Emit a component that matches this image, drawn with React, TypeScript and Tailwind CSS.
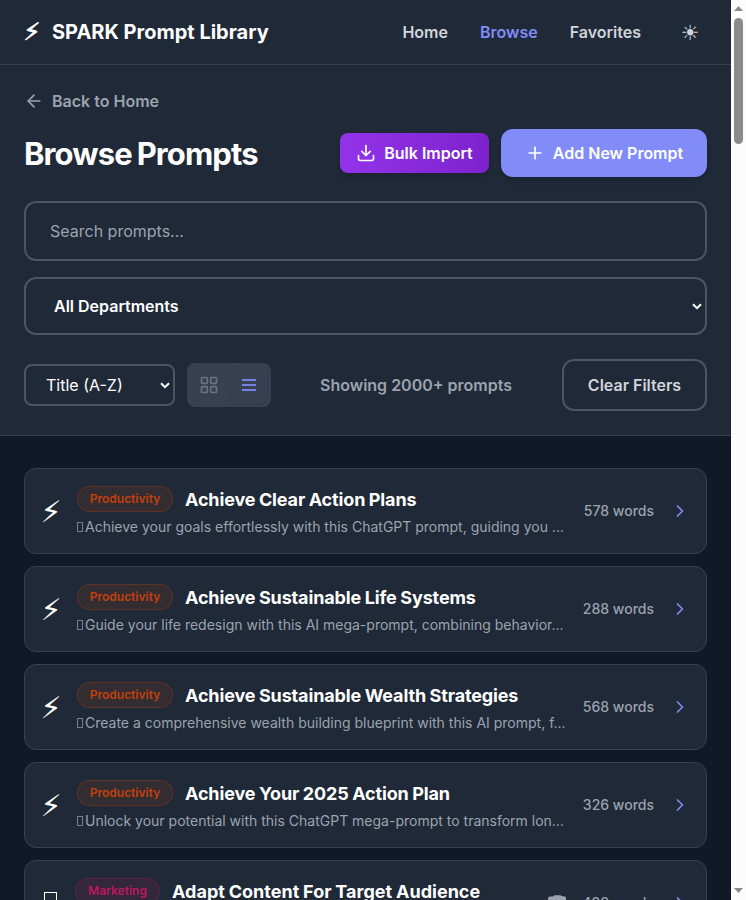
import { ArrowLeft, Download, Plus, ChevronRight, LayoutGrid } from "lucide-react";

type Prompt = { tag: string; title: string; text: string; words: string };

const prompts: Prompt[] = [
  { tag: "Productivity", title: "Achieve Clear Action Plans", text: "Achieve your goals effortlessly with this ChatGPT prompt, guiding you ...", words: "578 words" },
  { tag: "Productivity", title: "Achieve Sustainable Life Systems", text: "Guide your life redesign with this AI mega-prompt, combining behavior...", words: "288 words" },
  { tag: "Productivity", title: "Achieve Sustainable Wealth Strategies", text: "Create a comprehensive wealth building blueprint with this AI prompt, f...", words: "568 words" },
  { tag: "Productivity", title: "Achieve Your 2025 Action Plan", text: "Unlock your potential with this ChatGPT mega-prompt to transform lon...", words: "326 words" },
  { tag: "Marketing", title: "Adapt Content For Target Audience", text: "Adapt your content for each audience with this ChatGPT prompt...", words: "498 words" },
];

function SelectArrow() {
  return (
    <svg width="10" height="7" viewBox="0 0 10 7" fill="none" stroke="#fff" strokeWidth="2" className="shrink-0">
      <path d="M1 1.2 5 5.2 9 1.2" />
    </svg>
  );
}

function CameraIcon() {
  return (
    <svg width="18" height="16" viewBox="0 0 18 16" className="shrink-0 self-center text-[#9ca3af]">
      <path fill="currentColor" d="M2 1.5h3L6.5.3h6l1.5 1h2A2 2 0 0 1 18 3.3V13a2 2 0 0 1-2 2H2a2 2 0 0 1-2-2V3.5a2 2 0 0 1 2-2Z" />
      <circle cx="9.5" cy="9" r="4" fill="#1f2937" />
      <circle cx="9.5" cy="9" r="2.5" fill="currentColor" />
    </svg>
  );
}

function Row({ p }: { p: Prompt }) {
  const marketing = p.tag === "Marketing";
  return (
    <article className="flex h-[86px] shrink-0 items-center gap-4 rounded-xl border border-[#374151] bg-[#1f2937] px-4">
      {marketing ? (
        <span className="flex w-[18px] shrink-0 justify-center">
          <span className="h-[22px] w-[13px] border-[1.5px] border-white" />
        </span>
      ) : (
        <span className="flex w-5 shrink-0 justify-center pt-px font-['DejaVu_Sans',sans-serif] text-[30px] leading-9 text-white">{"⚡\uFE0E"}</span>
      )}
      <div className="min-w-0 flex-1">
        <div className="mb-1 flex h-7 items-center gap-3">
          <span
            className={
              "shrink-0 rounded-full border py-1 text-center text-xs font-semibold " +
              (marketing
                ? "w-[85px] border-[#be185d]/30 bg-[#be185d]/12 text-[#be185d]"
                : "w-24 border-[#c2410c]/30 bg-[#c2410c]/12 text-[#c2410c]")
            }
          >
            {p.tag}
          </span>
          <h3
            className={
              "pt-0.5 text-lg font-bold whitespace-nowrap text-white [word-spacing:-0.5px] " +
              (marketing ? "tracking-[0.02px]" : "tracking-[-0.14px]")
            }
          >
            {p.title}
          </h3>
        </div>
        <p className="flex items-center text-sm whitespace-nowrap text-[#9ca3af]">
          <span className="mr-[2px] h-[10px] w-[6px] shrink-0 border border-[#9ca3af]/70" />
          {p.text}
        </p>
      </div>
      {marketing && <CameraIcon />}
      <span className="shrink-0 text-sm font-medium text-[#9ca3af]">{p.words}</span>
      <ChevronRight size={20} className="shrink-0 text-[#818cf8]" />
    </article>
  );
}

export default function App() {
  return (
    <div className="flex h-[900px] w-[746px] overflow-hidden bg-[#111827] font-['Inter',sans-serif]">
      <div className="flex w-[731px] flex-col">
        <header className="flex h-[65px] shrink-0 items-center justify-between border-b border-[#374151] bg-[#1f2937] px-6">
          <div className="flex items-center gap-3 text-xl font-bold text-white">
            <span className="flex w-4 justify-center font-['DejaVu_Sans',sans-serif] text-2xl [-webkit-text-stroke:0.8px_white]">{"⚡\uFE0E"}</span>
            <span>SPARK Prompt Library</span>
          </div>
          <nav className="flex items-center gap-8 font-semibold text-[#d1d5db]">
            <span>Home</span>
            <span className="text-[#818cf8]">Browse</span>
            <span>Favorites</span>
            <span className="flex w-[34px] justify-center pt-1 font-['DejaVu_Sans',sans-serif] text-[21px] font-normal">{"☀\uFE0E"}</span>
          </nav>
        </header>
        <section className="flex h-[371px] shrink-0 flex-col border-b border-[#374151] bg-[#1f2937] px-6 pt-6">
          <div className="flex h-6 items-center gap-2 font-semibold text-[#9ca3af]">
            <ArrowLeft size={20} />
            Back to Home
          </div>
          <div className="mt-4 flex h-12 items-center justify-between">
            <h1 className="pt-0.5 text-[31px] font-bold tracking-[-0.9px] text-white [word-spacing:-1.5px]">Browse Prompts</h1>
            <div className="flex items-center gap-3 font-semibold text-white">
              <button className="flex h-10 w-[149px] items-center justify-center gap-2 rounded-lg bg-linear-to-r from-[#9333ea] to-[#7e22ce] shadow-md">
                <Download size={20} />
                Bulk Import
              </button>
              <button className="flex h-12 w-[206px] items-center justify-center gap-2 rounded-xl bg-[#818cf8] shadow-md">
                <Plus size={20} />
                Add New Prompt
              </button>
            </div>
          </div>
          <div className="mt-6 flex h-[60px] items-center rounded-xl border-2 border-[#4b5563] px-6 text-[#9ca3af]">Search prompts...</div>
          <div className="mt-4 flex h-[58px] items-center justify-between rounded-xl border-2 border-[#4b5563] pr-[3px] pl-7 font-semibold text-white">
            All Departments
            <SelectArrow />
          </div>
          <div className="mt-6 flex h-[52px] items-center">
            <div className="flex h-[42px] w-[151px] items-center justify-between rounded-lg border-2 border-[#4b5563] pr-[3px] pl-5 text-white">
              Title (A-Z)
              <SelectArrow />
            </div>
            <div className="ml-3 flex h-11 w-[84px] items-center gap-1 rounded-lg bg-[#374151] p-1">
              <div className="flex h-9 w-9 items-center justify-center text-[#6b7280]">
                <LayoutGrid size={20} />
              </div>
              <div className="flex h-9 w-9 items-center justify-center rounded-md bg-[#374151] text-[#7480e4] shadow">
                <svg width="20" height="20" viewBox="0 0 20 20" stroke="currentColor" strokeWidth="1.8">
                  <path d="M3 5h14M3 10h14M3 15h14" />
                </svg>
              </div>
            </div>
            <span className="ml-auto font-semibold text-[#9ca3af]">Showing 2000+ prompts</span>
            <button className="ml-[50px] h-[52px] w-[145px] rounded-xl border-2 border-[#4b5563] font-semibold text-[#d1d5db]">Clear Filters</button>
          </div>
        </section>
        <main className="flex flex-col gap-3 px-6 pt-8">
          {prompts.map((p) => (
            <Row key={p.title} p={p} />
          ))}
        </main>
      </div>
      <div className="flex w-[15px] flex-col items-center bg-[#fcfcfc]">
        <svg width="15" height="18" viewBox="0 0 15 18" fill="#8b8b8b" className="shrink-0">
          <path d="M3 11 7.5 6 12 11Z" />
        </svg>
        <div className="h-[126px] w-[9px] shrink-0 rounded-full bg-[#8b8b8b]" />
        <svg width="15" height="18" viewBox="0 0 15 18" fill="#8b8b8b" className="mt-auto shrink-0">
          <path d="M3 6 7.5 11 12 6Z" />
        </svg>
      </div>
    </div>
  );
}
